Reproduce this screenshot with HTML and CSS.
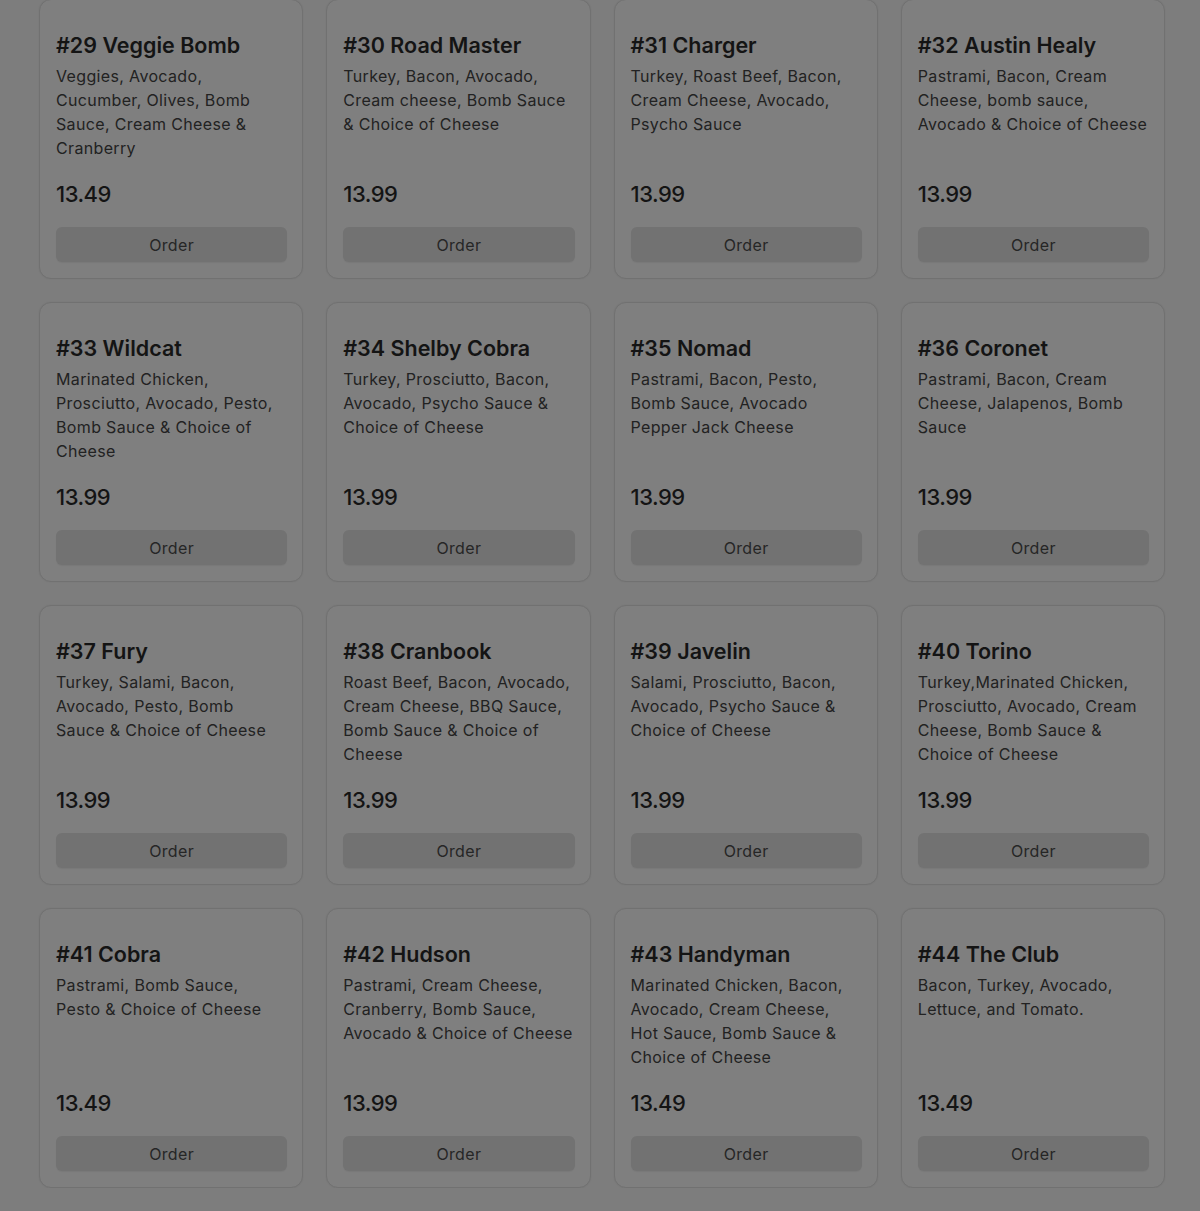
FILE: index.html
```html
<!DOCTYPE html>
<html lang="en">
<head>
<meta charset="utf-8">
<title>Menu</title>
<link rel="stylesheet" href="styles.css">
</head>
<body>
<main class="menu">
  <div class="grid">
    <article class="card"><h3 class="title">#29 Veggie Bomb</h3><p class="desc">Veggies, Avocado, Cucumber, Olives, Bomb Sauce, Cream Cheese &amp; Cranberry</p><div class="price">13.49</div><button class="order">Order</button></article>
    <article class="card"><h3 class="title">#30 Road Master</h3><p class="desc">Turkey, Bacon, Avocado, Cream cheese, Bomb Sauce &amp; Choice of Cheese</p><div class="price">13.99</div><button class="order">Order</button></article>
    <article class="card"><h3 class="title">#31 Charger</h3><p class="desc">Turkey, Roast Beef, Bacon, Cream Cheese, Avocado, Psycho Sauce</p><div class="price">13.99</div><button class="order">Order</button></article>
    <article class="card"><h3 class="title">#32 Austin Healy</h3><p class="desc">Pastrami, Bacon, Cream Cheese, bomb sauce, Avocado &amp; Choice of Cheese</p><div class="price">13.99</div><button class="order">Order</button></article>

    <article class="card"><h3 class="title">#33 Wildcat</h3><p class="desc">Marinated Chicken, Prosciutto, Avocado, Pesto, Bomb Sauce &amp; Choice of Cheese</p><div class="price">13.99</div><button class="order">Order</button></article>
    <article class="card"><h3 class="title">#34 Shelby Cobra</h3><p class="desc">Turkey, Prosciutto, Bacon, Avocado, Psycho Sauce &amp; Choice of Cheese</p><div class="price">13.99</div><button class="order">Order</button></article>
    <article class="card"><h3 class="title">#35 Nomad</h3><p class="desc">Pastrami, Bacon, Pesto, Bomb Sauce, Avocado Pepper Jack Cheese</p><div class="price">13.99</div><button class="order">Order</button></article>
    <article class="card"><h3 class="title">#36 Coronet</h3><p class="desc">Pastrami, Bacon, Cream Cheese, Jalapenos, Bomb Sauce</p><div class="price">13.99</div><button class="order">Order</button></article>

    <article class="card"><h3 class="title">#37 Fury</h3><p class="desc">Turkey, Salami, Bacon, Avocado, Pesto, Bomb Sauce &amp; Choice of Cheese</p><div class="price">13.99</div><button class="order">Order</button></article>
    <article class="card"><h3 class="title">#38 Cranbook</h3><p class="desc">Roast Beef, Bacon, Avocado, Cream Cheese, BBQ Sauce, Bomb Sauce &amp; Choice of Cheese</p><div class="price">13.99</div><button class="order">Order</button></article>
    <article class="card"><h3 class="title">#39 Javelin</h3><p class="desc">Salami, Prosciutto, Bacon, Avocado, Psycho Sauce &amp; Choice of Cheese</p><div class="price">13.99</div><button class="order">Order</button></article>
    <article class="card"><h3 class="title">#40 Torino</h3><p class="desc">Turkey,Marinated Chicken, Prosciutto, Avocado, Cream Cheese, Bomb Sauce &amp; Choice of Cheese</p><div class="price">13.99</div><button class="order">Order</button></article>

    <article class="card"><h3 class="title">#41 Cobra</h3><p class="desc">Pastrami, Bomb Sauce, Pesto &amp; Choice of Cheese</p><div class="price">13.49</div><button class="order">Order</button></article>
    <article class="card"><h3 class="title">#42 Hudson</h3><p class="desc">Pastrami, Cream Cheese, Cranberry, Bomb Sauce, Avocado &amp; Choice of Cheese</p><div class="price">13.99</div><button class="order">Order</button></article>
    <article class="card"><h3 class="title">#43 Handyman</h3><p class="desc">Marinated Chicken, Bacon, Avocado, Cream Cheese, Hot Sauce, Bomb Sauce &amp; Choice of Cheese</p><div class="price">13.49</div><button class="order">Order</button></article>
    <article class="card"><h3 class="title">#44 The Club</h3><p class="desc">Bacon, Turkey, Avocado, Lettuce, and Tomato.</p><div class="price">13.49</div><button class="order">Order</button></article>
  </div>
</main>
</body>
</html>
```
FILE: styles.css
```css
html, body {
  margin: 0;
  padding: 0;
  background: #7d7d7d;
}
body {
  font-family: Inter, "Open Sans", sans-serif;
  color: #151515;
  overflow: hidden;
}
.menu {
  padding: 0 35px 0 39px;
  margin-top: -1px;
}
.grid {
  display: grid;
  grid-template-columns: repeat(4, 1fr);
  grid-auto-rows: 280px;
  gap: 23px;
}
.card {
  box-sizing: border-box;
  display: flex;
  flex-direction: column;
  background: #7f7f7f;
  border: 1px solid #717171;
  border-radius: 12px;
  padding: 16px 15px 16px 16px;
  box-shadow: 0 0 2px rgba(0, 0, 0, 0.06);
}
.title {
  margin: 16px 0 0;
  font-size: 21.5px;
  font-weight: 600;
  line-height: 26px;
  color: #141414;
}
.desc {
  flex: 1;
  margin: 6px 0 0;
  font-size: 16px;
  line-height: 24px;
  letter-spacing: 0.35px;
  color: #222;
}
.price {
  font-size: 22px;
  font-weight: 500;
  line-height: 26px;
  letter-spacing: -0.5px;
  margin-bottom: 20px;
  color: #141414;
}
.order {
  height: 35px;
  border: 0;
  border-radius: 6px;
  background: #727272;
  font-family: inherit;
  font-size: 16px;
  letter-spacing: 0.35px;
  color: #262626;
  padding: 0;
  box-shadow: 0 1px 1px rgba(0, 0, 0, 0.05);
}
```
